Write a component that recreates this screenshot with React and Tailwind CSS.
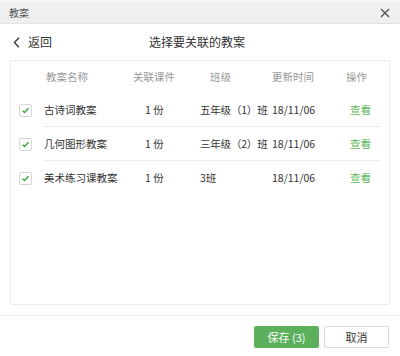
import React from "react";

const rows = [
  { name: "古诗词教案", count: "1 份", cls: "五年级（1）班", date: "18/11/06" },
  { name: "几何图形教案", count: "1 份", cls: "三年级（2）班", date: "18/11/06" },
  { name: "美术练习课教案", count: "1 份", cls: "3班", date: "18/11/06" },
];

function Check() {
  return (
    <div className="w-[13px] h-[13px] border border-[#d6d6d6] rounded-[2px] bg-white flex items-center justify-center">
      <svg width="9" height="9" viewBox="0 0 10 10">
        <path d="M1.8 5.2 L4 7.3 L8.3 2.6" stroke="#3aa83a" strokeWidth="1.6" fill="none" />
      </svg>
    </div>
  );
}

export default function App() {
  return (
    <div
      className="w-[400px] h-[356px] bg-white flex flex-col overflow-hidden"
      style={{ fontFamily: '"Microsoft YaHei", "Noto Sans CJK SC", "Noto Sans", sans-serif' }}
    >
      <div className="h-[2px] bg-[#f7f7f7]" />
      <div className="h-[22px] bg-[#efefef] flex items-center justify-between pl-[9px] pr-[10px] border-b border-[#e4e4e4]">
        <span className="text-[10px] text-[#555]">教案</span>
        <svg width="10" height="10" viewBox="0 0 10 10">
          <path d="M1 1 L9 9 M9 1 L1 9" stroke="#555" strokeWidth="1.4" />
        </svg>
      </div>
      <div className="h-[36px] relative flex items-center">
        <div className="flex items-center pl-[13px] gap-[8px] text-[#333]">
          <svg width="7" height="11" viewBox="0 0 7 11">
            <path d="M6 0.8 L1.4 5.5 L6 10.2" stroke="#333" strokeWidth="1.3" fill="none" />
          </svg>
          <span className="text-[12px]">返回</span>
        </div>
        <div className="absolute left-0 right-[6px] text-center text-[12px] text-[#333] pointer-events-none">
          选择要关联的教案
        </div>
      </div>
      <div className="mx-[10px] h-[245px] border border-[#ececec] flex flex-col">
        <div className="h-[32px] flex items-center text-[10.5px] text-[#999]">
          <div className="w-[35px]" />
          <div className="w-[87px]">教案名称</div>
          <div className="w-[77px]">关联课件</div>
          <div className="w-[62px]">班级</div>
          <div className="w-[74px]">更新时间</div>
          <div>操作</div>
        </div>
        {rows.map((r, i) => (
          <div key={i} className="h-[34px] flex items-center text-[10.5px] text-[#333] relative">
            <div className="w-[33px] pl-[8px]">
              <Check />
            </div>
            <div className="w-[101px]">{r.name}</div>
            <div className="w-[55px]">{r.count}</div>
            <div className="w-[72px] whitespace-nowrap tracking-[-0.2px]">{r.cls}</div>
            <div className="w-[78px]">{r.date}</div>
            <div className="text-[#5cb85c]">查看</div>
            {i < 2 && <div className="absolute left-[32px] right-[8px] bottom-0 h-px bg-[#ececec]" />}
          </div>
        ))}
      </div>
      <div className="mt-[10px] h-px bg-[#ececec]" />
      <div className="flex justify-end gap-[5px] pr-[11px] pt-[10px]">
        <button className="w-[65px] h-[22px] rounded-[2px] bg-[#5cb05c] text-white text-[11px] flex items-center justify-center">
          保存 (3)
        </button>
        <button className="w-[65px] h-[22px] rounded-[2px] bg-white border border-[#dcdcdc] text-[#333] text-[11px] flex items-center justify-center">
          取消
        </button>
      </div>
    </div>
  );
}
